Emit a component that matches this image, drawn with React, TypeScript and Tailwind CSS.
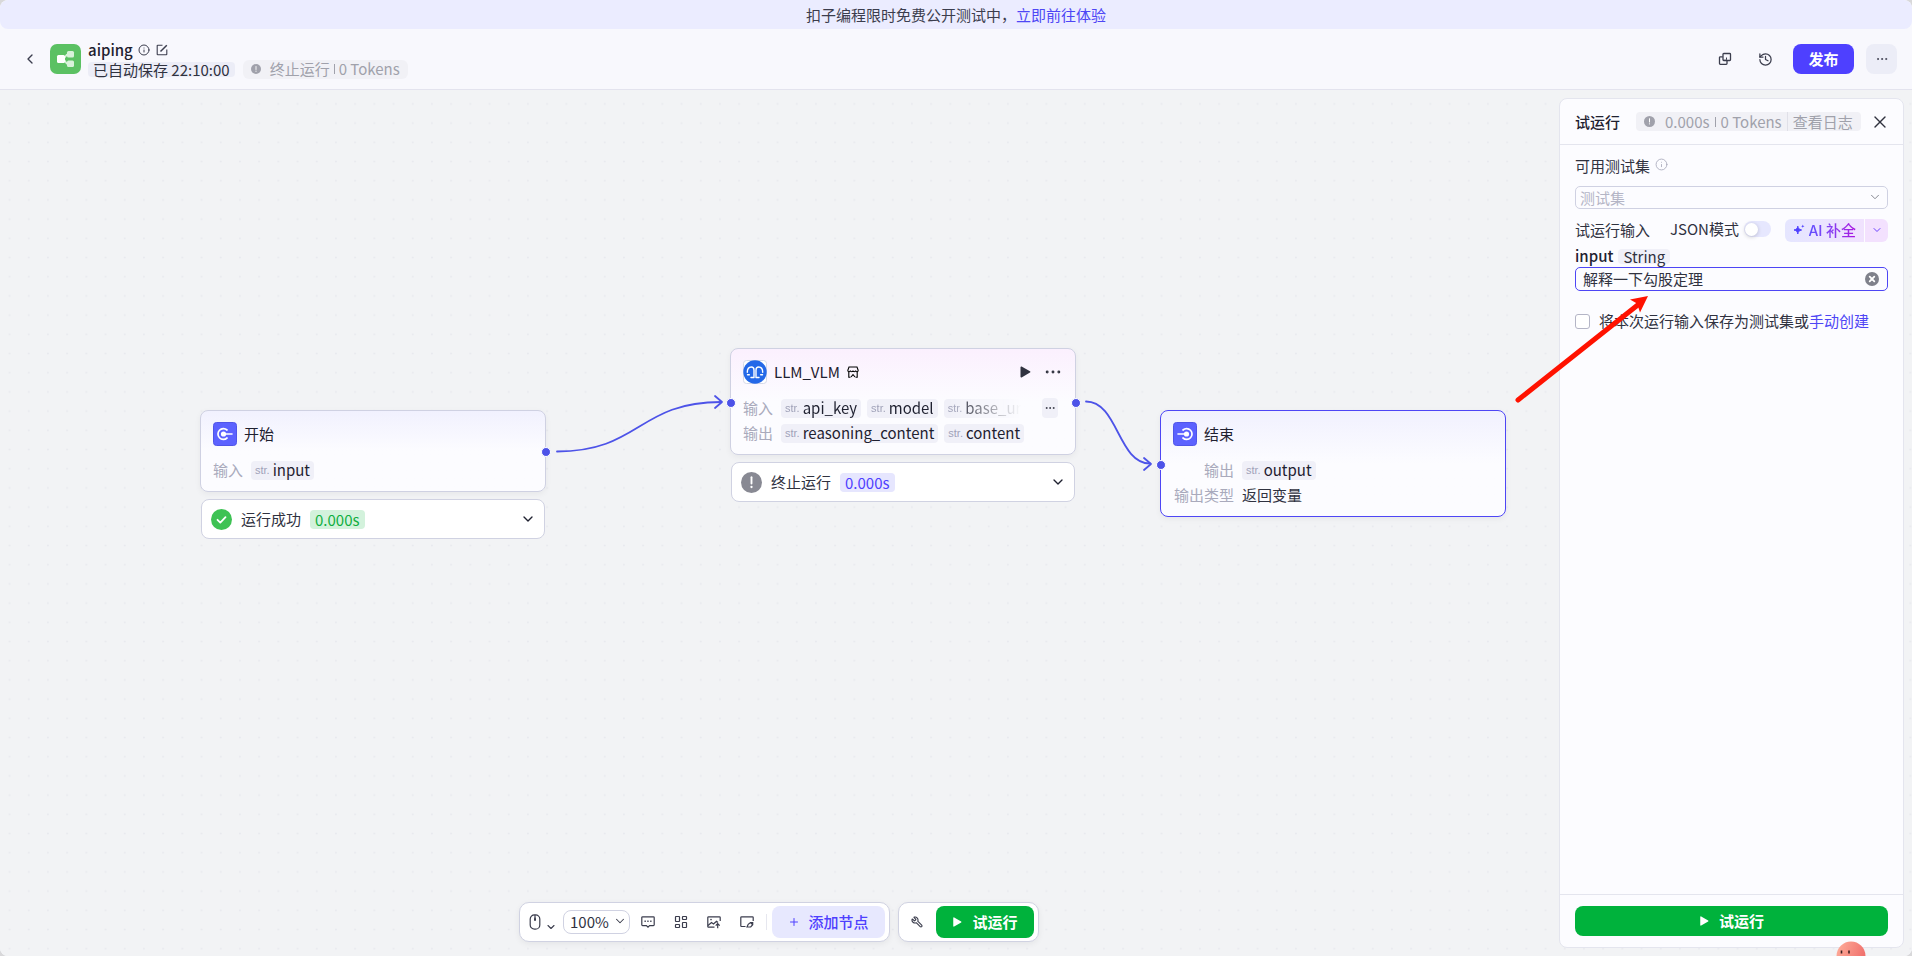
import { useState, type ReactNode } from "react";
import { ChevronDown, ChevronLeft, Ellipsis, History, Info, Plus, Wrench, X } from "lucide-react";
import clsx from "clsx";

function PlayIcon({ className }: { className?: string }) {
  return (
    <svg viewBox="0 0 12 12" aria-hidden className={className} fill="currentColor">
      <path d="M1.5 1.2c0-.6.6-1 1.1-.7l8.4 4.8c.5.3.5 1 0 1.3L2.6 11.5c-.5.3-1.1-.1-1.1-.7z" />
    </svg>
  );
}

function AlertDot({ className }: { className?: string }) {
  return (
    <svg viewBox="0 0 20 20" aria-hidden className={className}>
      <circle cx="10" cy="10" r="10" fill="currentColor" />
      <path d="M10 5v6" stroke="#fff" strokeWidth="1.8" strokeLinecap="round" />
      <circle cx="10" cy="14.3" r="1.1" fill="#fff" />
    </svg>
  );
}

function WorkflowLogo() {
  return (
    <svg viewBox="0 0 31 30" aria-hidden className="h-[30px] w-[31px] shrink-0">
      <rect width="31" height="30" rx="7" fill="#5bc163" />
      <path d="M13 14c3.500 0 2-3.500 5-3.500M13 16c3.500 0 2 4 5 4" stroke="#d8f2da" strokeWidth="1.8" fill="none" />
      <rect x="17" y="7" width="7" height="6.500" rx="1.500" fill="#d8f2da" />
      <rect x="17" y="16.500" width="7" height="6.500" rx="1.500" fill="#d8f2da" />
      <rect x="7" y="11" width="8" height="8" rx="1.500" fill="#fff" />
    </svg>
  );
}

function StartIcon({ flip }: { flip?: boolean }) {
  return (
    <svg viewBox="0 0 24 24" aria-hidden className="size-6 shrink-0">
      <rect x="0.5" y="0.5" width="23" height="23" rx="3" fill="#5c62ff" stroke="#5055e8" strokeWidth="1" />
      <g transform={flip ? "matrix(-1 0 0 1 24 0)" : undefined}>
        <path d="M14 8A5.400 5.400 0 1 0 14 16" fill="none" stroke="#fff" strokeWidth="1.7" strokeLinecap="round" />
        <circle cx="10.5" cy="12" r="2.600" fill="#fff" />
        <path d="M11 12h8" stroke="#fff" strokeWidth="1.6" strokeLinecap="round" />
      </g>
    </svg>
  );
}

function PluginIcon() {
  return (
    <svg viewBox="0 0 24 24" aria-hidden className="size-6 shrink-0">
      <rect x="0.5" y="0.5" width="23" height="23" rx="3" fill="#fff" stroke="#d5d8e8" />
      <circle cx="12" cy="12" r="11.7" fill="#2468e8" />
      <g fill="none" stroke="#fff" strokeWidth="1.4" strokeLinecap="round">
        <path d="M4.300 12.300C4.300 9 6 7 8.300 7c2 0 2.700 1.300 2.700 3v6.500" />
        <path d="M19.700 12.300C19.700 9 18 7 15.700 7c-2 0-2.700 1.300-2.700 3v6.500" />
        <path d="M8 17.500h3M13 17.500h3M4.500 14.800h1.800M17.700 14.800h1.800" />
      </g>
    </svg>
  );
}

function StoreIcon() {
  return (
    <svg viewBox="0 0 12 12" aria-hidden className="size-3 shrink-0" fill="none" stroke="currentColor" strokeWidth="1.1">
      <path d="M2 1h8l1.200 3.300c0 1.900-2.400 1.900-2.600.2-.2 1.700-2.500 1.700-2.600 0-.1 1.700-2.400 1.700-2.600 0C3.200 6.200.8 6.200.8 4.300z" />
      <path d="M1.800 6v5.200h1.700M10.200 6v5.200H8.500M4 11l2-2.300L8 11" />
    </svg>
  );
}

function EditIcon() {
  return (
    <svg viewBox="0 0 12 12" aria-hidden className="size-3" fill="none" stroke="currentColor" strokeWidth="1.1">
      <path d="M6.500 1.200H1.800a.6.600 0 0 0-.6.600v8.400a.6.600 0 0 0 .6.600h8.400a.6.600 0 0 0 .6-.6V5.500" />
      <path d="M4.500 7.500l6.300-6.300" strokeWidth="1.500" />
    </svg>
  );
}

function CopyIcon() {
  return (
    <svg viewBox="0 0 14 14" aria-hidden className="size-3.5" fill="none" stroke="currentColor" strokeWidth="1.3">
      <rect x="5" y="1.500" width="7.500" height="7" rx="0.800" />
      <path d="M4.800 4.800H2.300a.8.800 0 0 0-.8.800v6a.8.800 0 0 0 .8.800h5.900a.8.800 0 0 0 .8-.8V8.800" />
      <path d="M5 8.300h2.500a1 1 0 0 0 1-1V5.500" strokeWidth="1" />
    </svg>
  );
}

function MouseIcon() {
  return (
    <svg viewBox="0 0 12 16" aria-hidden className="h-4 w-3" fill="none" stroke="currentColor" strokeWidth="1.2">
      <rect x="1.2" y="0.8" width="9.600" height="14.400" rx="4.300" />
      <path d="M6 1v3" />
      <rect x="5" y="3.500" width="2" height="3.500" rx="1" fill="currentColor" stroke="none" />
    </svg>
  );
}

function CommentIcon() {
  return (
    <svg viewBox="0 0 14 14" aria-hidden className="size-3.5" fill="none" stroke="currentColor" strokeWidth="1.2">
      <path d="M1.600 1.800h10.800a.8.800 0 0 1 .8.800v7.200a.8.800 0 0 1-.8.800H8.600L7 12.200l-1.600-1.600H1.600a.8.800 0 0 1-.8-.8V2.600a.8.800 0 0 1 .8-.8z" />
      <path d="M3.500 6.200h1.300M6.300 6.200h1.300M9.200 6.200h1.300" strokeWidth="1.4" />
    </svg>
  );
}

function LayoutIcon() {
  return (
    <svg viewBox="0 0 14 14" aria-hidden className="size-3.5" fill="none" stroke="currentColor" strokeWidth="1.2">
      <rect x="1.500" y="1.500" width="4" height="5" rx="0.500" />
      <rect x="8.500" y="1.500" width="4" height="3" rx="0.500" />
      <rect x="1.500" y="9.500" width="4" height="3" rx="0.500" />
      <rect x="8.500" y="7.500" width="4" height="5" rx="0.500" />
    </svg>
  );
}

function ImageIcon() {
  return (
    <svg viewBox="0 0 14 14" aria-hidden className="size-3.5" fill="none" stroke="currentColor" strokeWidth="1.2">
      <path d="M7.500 12.200H1.600a.8.800 0 0 1-.8-.8V2.600a.8.800 0 0 1 .8-.8h10.800a.8.800 0 0 1 .8.800V6" />
      <path d="M1 10.500l3.500-3 2 1.500 3-2.800 1.500 1.300M10.700 13.200V9M8.700 10.700l2-2 2 2" />
      <circle cx="4" cy="4.600" r="0.800" fill="currentColor" stroke="none" />
    </svg>
  );
}

function LoopIcon() {
  return (
    <svg viewBox="0 0 14 14" aria-hidden className="size-3.5" fill="none" stroke="currentColor" strokeWidth="1.2">
      <path d="M5.500 11.500H1.600a.8.800 0 0 1-.8-.8V2.600a.8.800 0 0 1 .8-.8h10.800a.8.800 0 0 1 .8.800V6" />
      <path d="M7 12l1.200-2.700 2.300-1.800h2.200v2.200l-2 2.300zM10.500 7.500l2 2" />
    </svg>
  );
}

function SparkleIcon() {
  return (
    <svg viewBox="0 0 12 12" aria-hidden className="size-3 shrink-0" fill="#4e40ff">
      <path
        d="M4.800 2.200c.5 2.400 1.200 3.200 3.800 3.800-2.600.6-3.300 1.400-3.800 4-.5-2.600-1.200-3.400-3.800-4 2.600-.6 3.300-1.400 3.800-3.800z"
        stroke="#4e40ff"
        strokeWidth="1"
      />
      <path d="M9.800.5c.2 1.100.6 1.500 1.700 1.700-1.100.2-1.500.6-1.700 1.700-.2-1.100-.6-1.500-1.700-1.700 1.100-.2 1.500-.6 1.700-1.700z" />
    </svg>
  );
}

function ClearIcon() {
  return (
    <svg viewBox="0 0 14 14" aria-hidden className="size-3.5">
      <circle cx="7" cy="7" r="7" fill="#7f818b" />
      <path d="M4.700 4.700l4.600 4.600M9.300 4.700L4.700 9.300" stroke="#fff" strokeWidth="1.8" strokeLinecap="round" />
    </svg>
  );
}

function Chip({ children }: { children: ReactNode }) {
  return (
    <span className="flex h-[19px] shrink-0 items-center gap-[3px] rounded bg-[#f0f0f8] px-1">
      <span className="font-['Liberation_Sans'] text-[11px] text-[#a0a2b8]">str.</span>
      <span className="text-[15px] text-[#1f2130]">{children}</span>
    </span>
  );
}

function Port({ side }: { side: "left" | "right" }) {
  return (
    <span
      className={clsx(
        "absolute top-1/2 mt-px size-2.5 -translate-y-1/2 rounded-full border border-white bg-[#4d53e8]",
        side === "left" ? "-left-[5px]" : "-right-1.5",
      )}
    />
  );
}

function NodeCard({
  icon,
  title,
  extra,
  tint = "blue",
  active,
  ports,
  children,
}: {
  icon: ReactNode;
  title: string;
  extra?: ReactNode;
  tint?: "blue" | "pink";
  active?: boolean;
  ports: ("left" | "right")[];
  children: ReactNode;
}) {
  return (
    <section
      className={clsx(
        "relative rounded-lg border px-3 py-[11px] shadow-[0_2px_6px_rgba(0,0,0,0.05)]",
        active ? "border-[#4e46f5]" : "border-[#cfd1e2]",
        tint === "blue" ? "bg-linear-to-b from-[#f1f1fe] to-[#fcfcff] to-50%" : "bg-linear-to-b from-[#fbf0fe] to-[#fcfcff] to-50%",
      )}
    >
      <header className="flex h-6 items-center gap-[7px]">
        {icon}
        <h2 className="text-[15px] text-[#1f2130]">{title}</h2>
        {extra}
      </header>
      <div className="mt-3.5 flex flex-col gap-[5px]">{children}</div>
      {ports.map((side) => (
        <Port key={side} side={side} />
      ))}
    </section>
  );
}

function NodeRow({ label, wide, children }: { label: string; wide?: boolean; children: ReactNode }) {
  return (
    <div className="flex h-5 items-center gap-2">
      <span className={clsx("shrink-0 text-right text-[#a9aabc]", wide ? "w-[61px]" : "w-[30px]")}>{label}</span>
      {children}
    </div>
  );
}

function StatusBar({ icon, text, time, ok }: { icon: ReactNode; text: string; time: string; ok?: boolean }) {
  return (
    <button
      type="button"
      className="mx-px mt-[7px] flex h-10 items-center rounded-lg border border-[#d0d2e2] bg-white pr-2 pl-[9px] text-left"
    >
      {icon}
      <span className="ml-[9px] text-[#30323f]">{text}</span>
      <span
        className={clsx(
          "ml-[9px] h-[19px] rounded px-[5px] leading-[19px]",
          ok ? "bg-[#d3f2dc] text-[#0fae3f]" : "bg-[#e6e6fe] text-[#4e40ff]",
        )}
      >
        {time}
      </span>
      <ChevronDown className="ml-auto size-4 text-[#1f2130]" strokeWidth={2} />
    </button>
  );
}

function TopBar() {
  return (
    <header className="flex h-[61px] shrink-0 items-center border-b border-[#e3e3ee] bg-[#f8f8fd] pr-[15px] pl-[22px] text-[#3b3d4d]">
      <button type="button" aria-label="返回" className="mr-3">
        <ChevronLeft className="size-4" strokeWidth={2} />
      </button>
      <WorkflowLogo />
      <div className="ml-[7px] flex flex-col">
        <div className="mt-px flex h-[19px] items-center gap-[5px]">
          <h1 className="text-[15px] font-medium text-[#1f2130]">aiping</h1>
          <Info className="size-3" strokeWidth={2} />
          <button type="button" aria-label="编辑" className="ml-px">
            <EditIcon />
          </button>
        </div>
        <div className="flex h-5 items-center gap-2">
          <span className="h-[15px] rounded bg-[#ecedf7] px-[5px] leading-[15px] text-[#30323f]">已自动保存 22:10:00</span>
          <span className="flex h-[19px] items-center rounded-md bg-[#f1f1f6] px-2 text-[#a0a1ab]">
            <AlertDot className="size-2.5" />
            <span className="ml-[9px]">终止运行</span>
            <span className="mx-1 h-2.5 w-px bg-[#a0a1ab]" />
            <span>0 Tokens</span>
          </span>
        </div>
      </div>
      <div className="ml-auto flex items-center">
        <button type="button" aria-label="创建副本" className="mr-[26px]">
          <CopyIcon />
        </button>
        <button type="button" aria-label="历史" className="mr-5">
          <History className="size-[15px]" strokeWidth={2} />
        </button>
        <button type="button" className="h-[30px] w-[61px] rounded-lg bg-[#4e40ff] font-bold text-white">
          发布
        </button>
        <button type="button" aria-label="更多" className="ml-3 flex h-[30px] w-[31px] items-center justify-center rounded-lg bg-[#ecedf7]">
          <Ellipsis className="size-3.5" strokeWidth={1.5} />
        </button>
      </div>
    </header>
  );
}

function Edges() {
  return (
    <svg aria-hidden className="absolute inset-0 size-full">
      <defs>
        <pattern id="dots" width="19.2" height="19.2" patternUnits="userSpaceOnUse">
          <circle cx="9.5" cy="14" r="1" fill="#e8e9ee" />
        </pattern>
      </defs>
      <rect width="100%" height="100%" fill="url(#dots)" />
      <g fill="none" stroke="#4d53e8" strokeWidth="1.8" strokeLinecap="round" strokeLinejoin="round">
        <path d="M557 361.500C640 361.500 638 312 721 312" />
        <path d="M715 306l7 6-7 6" />
        <path d="M1086 311.500C1118 311.500 1118 373.500 1150 373.500" />
        <path d="M1144 368l7 6-7 6" />
      </g>
    </svg>
  );
}

function Toolbar() {
  const [zoom, setZoom] = useState("100%");
  return (
    <div className="absolute inset-x-0 bottom-[14px] flex justify-center gap-2 pl-[7px] text-[#3b3d4d]">
      <div className="flex h-10 items-center rounded-[10px] border border-[#d0d2e2] bg-white px-1 shadow-[0_2px_6px_rgba(0,0,0,0.06)]">
        <button type="button" aria-label="鼠标模式" className="ml-[5px] flex items-center gap-1">
          <MouseIcon />
          <ChevronDown className="mt-2.5 size-3" strokeWidth={2.2} />
        </button>
        <div className="relative ml-1.5">
          <select
            aria-label="缩放"
            value={zoom}
            onChange={(e) => setZoom(e.target.value)}
            className="h-6 w-[67px] appearance-none rounded-lg border border-[#d0d2e2] bg-white pl-1.5 text-[15px] text-[#30323f]"
          >
            <option>50%</option>
            <option>100%</option>
            <option>150%</option>
          </select>
          <ChevronDown className="pointer-events-none absolute top-1 right-[3px] size-3.5" strokeWidth={1.8} />
        </div>
        <div className="ml-[11px] flex items-center gap-[19px]">
          <button type="button" aria-label="注释">
            <CommentIcon />
          </button>
          <button type="button" aria-label="优化布局">
            <LayoutIcon />
          </button>
          <button type="button" aria-label="图片">
            <ImageIcon />
          </button>
          <button type="button" aria-label="循环">
            <LoopIcon />
          </button>
        </div>
        <span className="mr-[5px] ml-3 h-4 w-px bg-[#e6e7ef]" />
        <button type="button" className="flex h-8 w-[113px] items-center justify-center gap-2 rounded-lg bg-[#e7e8fe] font-medium text-[#4e40ff]">
          <Plus className="size-3" strokeWidth={2} />
          添加节点
        </button>
      </div>
      <div className="flex h-10 items-center rounded-[10px] border border-[#d0d2e2] bg-white pr-1 pl-3 shadow-[0_2px_6px_rgba(0,0,0,0.06)]">
        <button type="button" aria-label="调试">
          <Wrench className="size-3 -scale-x-100" strokeWidth={2.2} />
        </button>
        <button type="button" className="ml-[13px] flex h-8 w-[98px] items-center justify-center gap-2.5 rounded-lg bg-[#00b23c] font-bold text-white">
          <PlayIcon className="size-2.5" />
          试运行
        </button>
      </div>
    </div>
  );
}

function Canvas() {
  return (
    <main className="relative min-w-0 flex-1">
      <div className="absolute top-80 left-[200px] flex w-[346px] flex-col">
        <NodeCard icon={<StartIcon />} title="开始" ports={["right"]}>
          <NodeRow label="输入">
            <Chip>input</Chip>
          </NodeRow>
        </NodeCard>
        <StatusBar
          ok
          text="运行成功"
          time="0.000s"
          icon={
            <svg viewBox="0 0 21 21" aria-hidden className="size-[21px]">
              <circle cx="10.5" cy="10.5" r="10.5" fill="#3ec254" />
              <path
                d="M6.500 10.800l2.800 2.800 5.200-5.400"
                fill="none"
                stroke="#fff"
                strokeWidth="1.8"
                strokeLinecap="round"
                strokeLinejoin="round"
              />
            </svg>
          }
        />
      </div>

      <div className="absolute top-[258px] left-[730px] flex w-[346px] flex-col">
        <NodeCard
          icon={<PluginIcon />}
          title="LLM_VLM"
          tint="pink"
          ports={["left", "right"]}
          extra={
            <>
              <StoreIcon />
              <div className="ml-auto flex items-center gap-3">
                <button type="button" aria-label="运行节点">
                  <PlayIcon className="size-3 text-[#30323f]" />
                </button>
                <button type="button" aria-label="更多操作">
                  <Ellipsis className="size-5 text-[#30323f]" strokeWidth={1.5} />
                </button>
              </div>
            </>
          }
        >
          <NodeRow label="输入">
            <div className="flex w-60 gap-1.5 overflow-hidden [mask-image:linear-gradient(90deg,#000_70%,transparent)]">
              <Chip>api_key</Chip>
              <Chip>model</Chip>
              <Chip>base_url</Chip>
            </div>
            <button type="button" aria-label="更多输入" className="mr-[5px] ml-auto flex h-5 w-4 items-center justify-center rounded bg-[#f0f0f8]">
              <Ellipsis className="size-3 text-[#30323f]" strokeWidth={1.8} />
            </button>
          </NodeRow>
          <NodeRow label="输出">
            <div className="flex gap-1.5">
              <Chip>reasoning_content</Chip>
              <Chip>content</Chip>
            </div>
          </NodeRow>
        </NodeCard>
        <StatusBar text="终止运行" time="0.000s" icon={<AlertDot className="size-[21px] text-[#888993]" />} />
      </div>

      <div className="absolute top-80 left-[1160px] flex w-[346px] flex-col">
        <NodeCard active icon={<StartIcon flip />} title="结束" ports={["left"]}>
          <NodeRow wide label="输出">
            <Chip>output</Chip>
          </NodeRow>
          <NodeRow wide label="输出类型">
            <span className="text-[#30323f]">返回变量</span>
          </NodeRow>
        </NodeCard>
      </div>
      <Toolbar />
    </main>
  );
}

function TestRunPanel() {
  const [query, setQuery] = useState("解释一下勾股定理");
  const [jsonMode, setJsonMode] = useState(false);

  return (
    <aside className="relative m-2 flex w-[345px] shrink-0 flex-col rounded-lg border border-[#e4e5ee] bg-[#fcfcff] text-[#30323f]">
      <header className="flex h-[46px] shrink-0 items-center border-b border-[#e4e5ee] pr-[13px] pl-[15px]">
        <h2 className="font-medium text-[#1f2130]">试运行</h2>
        <div className="ml-4 flex h-[19px] items-center rounded bg-[#f1f1f6] px-2 text-[#a0a1ab]">
          <AlertDot className="size-[11px]" />
          <span className="ml-2.5">0.000s</span>
          <span className="mx-[5px] h-2.5 w-px bg-[#a0a1ab]" />
          <span>0 Tokens</span>
          <span className="mx-[5px] h-[19px] w-px bg-[#e0e0e8]" />
          <a href="#log">查看日志</a>
        </div>
        <button type="button" aria-label="关闭" className="ml-auto">
          <X className="size-5" strokeWidth={1.6} />
        </button>
      </header>

      <form className="flex flex-1 flex-col px-[15px] pt-[11px]">
        <div className="flex h-5 items-center gap-[5px]">
          <label htmlFor="testset">可用测试集</label>
          <Info className="mb-1 size-[13px] text-[#a9aabc]" strokeWidth={1.6} />
        </div>
        <div className="relative mt-2.5">
          <select
            id="testset"
            className="block h-[23px] w-full appearance-none rounded-[5px] border border-[#cfd1e2] bg-[#fcfcff] px-1 text-[15px] text-[#b4b5c6]"
          >
            <option>测试集</option>
          </select>
          <ChevronDown className="pointer-events-none absolute top-1 right-1.5 size-3.5 text-[#7f818b]" strokeWidth={1.6} />
        </div>

        <div className="mt-[9px] flex h-6 items-center">
          <span>试运行输入</span>
          <label className="mb-0.5 ml-5 flex items-center gap-[5px]">
            JSON模式
            <input
              type="checkbox"
              role="switch"
              checked={jsonMode}
              onChange={(e) => setJsonMode(e.target.checked)}
              className="peer sr-only"
            />
            <span className="flex h-4 w-[27px] items-center rounded-full bg-[#e6e7fe] px-px peer-checked:justify-end peer-checked:bg-[#4e40ff]">
              <span className="size-[13px] rounded-full bg-white shadow-[0_1px_4px_rgba(0,0,0,0.2)]" />
            </span>
          </label>
          <div className="ml-auto flex gap-px">
            <button type="button" className="flex h-[23px] items-center gap-1 rounded-l-md bg-linear-to-r from-[#e5e6ff] to-[#f0e2fe] px-2">
              <SparkleIcon />
              <span className="bg-linear-to-r from-[#6050ff] to-[#a80ce0] bg-clip-text font-medium text-transparent">AI 补全</span>
            </button>
            <button type="button" aria-label="补全选项" className="flex h-[23px] w-[23px] items-center justify-center rounded-r-md bg-[#f3e1fe]">
              <ChevronDown className="size-3 text-[#6a40ff]" />
            </button>
          </div>
        </div>

        <div className="mt-1.5 flex h-4 items-center gap-[5px]">
          <label htmlFor="input" className="font-medium text-[#1f2130]">
            input
          </label>
          <span className="h-[15px] rounded bg-[#f0f0f8] px-[5px] leading-[15px]">String</span>
        </div>
        <div className="relative mt-[3px]">
          <input
            id="input"
            type="text"
            value={query}
            onChange={(e) => setQuery(e.target.value)}
            className="block h-6 w-full rounded-[5px] border border-[#4e46f5] bg-[#fcfcff] px-[7px] pb-0.5 text-[15px] outline-none"
          />
          <button type="button" aria-label="清空" onClick={() => setQuery("")} className="absolute top-[5px] right-[9px]">
            <ClearIcon />
          </button>
        </div>

        <div className="mt-5 flex items-center gap-[9px]">
          <input
            id="save"
            type="checkbox"
            className="size-[15px] appearance-none rounded-[3px] border border-[#b4b5c6] bg-white checked:bg-[#4e40ff]"
          />
          <label htmlFor="save">
            将本次运行输入保存为测试集或
            <a href="#create" className="text-[#4e46f5]">
              手动创建
            </a>
          </label>
        </div>
      </form>

      <footer className="border-t border-[#e4e5ee] px-[15px] py-[11px]">
        <button type="button" className="flex h-[30px] w-full items-center justify-center gap-2.5 rounded-lg bg-[#00b23c] font-bold text-white">
          <PlayIcon className="size-2.5" />
          试运行
        </button>
      </footer>

      <svg viewBox="0 0 140 120" aria-hidden className="pointer-events-none absolute top-[192px] -left-[48px] h-[120px] w-[140px]">
        <path d="M6 109L127 13" stroke="#ff1200" strokeWidth="5" strokeLinecap="round" />
        <path d="M136 5l-18 3.500 7 4 3 9z" fill="#ff1200" />
      </svg>
      <svg viewBox="0 0 30 15" aria-hidden className="absolute right-[37px] -bottom-[9px] h-[15px] w-[30px]">
        <defs>
          <linearGradient id="blob" x1="0" y1="0" x2="1" y2="0.4">
            <stop offset="0" stopColor="#ffb09c" />
            <stop offset="1" stopColor="#f0706c" />
          </linearGradient>
        </defs>
        <circle cx="15" cy="15" r="14.5" fill="url(#blob)" />
        <path d="M5.500 9.500v3M13 9.500v3" stroke="#3a2020" strokeWidth="1.6" />
      </svg>
    </aside>
  );
}

export default function App() {
  return (
    <div className="h-screen bg-[#d8d8da] font-['Noto_Sans_CJK_SC',sans-serif] text-[15px] leading-5">
      <div className="flex h-full flex-col overflow-hidden rounded-lg bg-[#f8f8fd]">
        <div className="flex h-[29px] shrink-0 items-center justify-center rounded-lg bg-[#ebecff] text-[#3b3d4d]">
          扣子编程限时免费公开测试中，
          <a href="#try" className="text-[#4e46f5]">
            立即前往体验
          </a>
        </div>
        <TopBar />
        <div className="relative flex min-h-0 flex-1 bg-[#f2f3f5]">
          <Edges />
          <Canvas />
          <TestRunPanel />
        </div>
      </div>
    </div>
  );
}
